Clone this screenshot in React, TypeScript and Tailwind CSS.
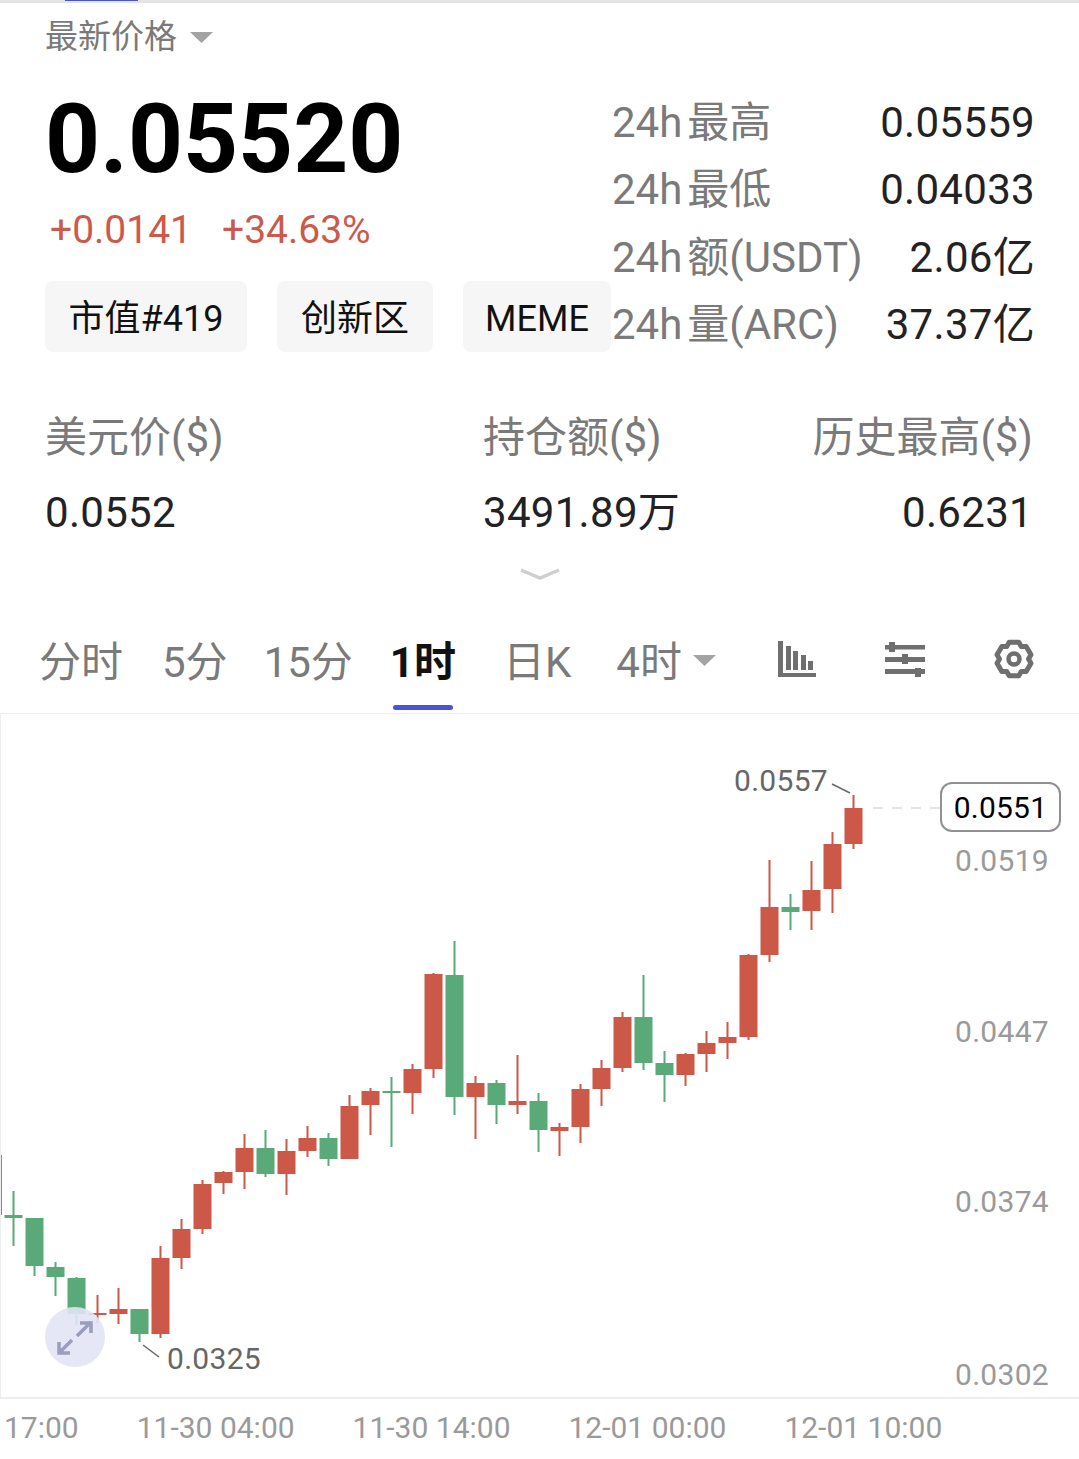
type Candle = [number, "r" | "g", number, number, number, number];

// x centre, colour, wick top, body top, body bottom, wick bottom
const candles: Candle[] = [
  [13.5, "g", 1191, 1215, 1218, 1246],
  [34.5, "g", 1218, 1218, 1266, 1276],
  [55.5, "g", 1262, 1267, 1277, 1296],
  [76.5, "g", 1277, 1278, 1314, 1325],
  [97.5, "r", 1295, 1313, 1315, 1323],
  [118.5, "r", 1288, 1309, 1314, 1324],
  [139.5, "g", 1309, 1309, 1334, 1342],
  [160.5, "r", 1246, 1258, 1334, 1338],
  [181.5, "r", 1219, 1229, 1258, 1269],
  [202.5, "r", 1180, 1184, 1229, 1234],
  [223.5, "r", 1171, 1172, 1183, 1194],
  [244.5, "r", 1134, 1148, 1172, 1189],
  [265.5, "g", 1130, 1148, 1174, 1177],
  [286.5, "r", 1139, 1151, 1174, 1195],
  [307.5, "r", 1126, 1138, 1151, 1157],
  [328.5, "g", 1133, 1138, 1159, 1166],
  [349.5, "r", 1095, 1106, 1159, 1159],
  [370.5, "r", 1088, 1091, 1105, 1135],
  [391.5, "g", 1077, 1091, 1093, 1147],
  [412.5, "r", 1064, 1069, 1093, 1114],
  [433.5, "r", 973, 974, 1069, 1078],
  [454.5, "g", 941, 975, 1097, 1115],
  [475.5, "r", 1076, 1083, 1097, 1139],
  [496.5, "g", 1080, 1083, 1105, 1124],
  [517.5, "r", 1055, 1101, 1105, 1114],
  [538.5, "g", 1093, 1101, 1130, 1152],
  [559.5, "r", 1123, 1127, 1131, 1156],
  [580.5, "r", 1084, 1089, 1127, 1143],
  [601.5, "r", 1060, 1068, 1089, 1106],
  [622.5, "r", 1012, 1017, 1068, 1072],
  [643.5, "g", 975, 1017, 1063, 1070],
  [664.5, "g", 1051, 1063, 1075, 1102],
  [685.5, "r", 1053, 1054, 1075, 1086],
  [706.5, "r", 1031, 1043, 1054, 1072],
  [727.5, "r", 1022, 1037, 1043, 1059],
  [748.5, "r", 954, 955, 1037, 1040],
  [769.5, "r", 860, 907, 955, 962],
  [790.5, "g", 894, 907, 912, 930],
  [811.5, "r", 861, 890, 911, 930],
  [832.5, "r", 832, 844, 889, 913],
  [853.5, "r", 795, 808, 844, 849],
];

const stats = [
  ["最高", "0.05559"],
  ["最低", "0.04033"],
  ["额(USDT)", "2.06亿"],
  ["量(ARC)", "37.37亿"],
];

// six flat-topped teeth, outline only
const gearPath = () => {
  const pts: string[] = [];
  for (let i = 0; i < 6; i++) {
    const a = -90 + i * 60;
    for (const [off, r] of [[-16, 17.5], [16, 17.5], [30, 14.5]]) {
      const t = ((a + off) * Math.PI) / 180;
      pts.push(`${(22 + r * Math.cos(t)).toFixed(2)} ${(22 + r * Math.sin(t)).toFixed(2)}`);
    }
  }
  return `M${pts.join("L")}Z`;
};

const Caret = ({ className }: { className: string }) => (
  <svg className={className} width="23" height="11" viewBox="0 0 23 11">
    <path d="M0 0H23L11.5 11Z" fill="#a3a3a3" />
  </svg>
);

const Chart = () => (
  <svg className="block" width="1078" height="683" viewBox="1 714 1078 683">
    <rect x="0" y="1155" width="2" height="60" fill="#57a877" />
    {candles.map(([x, c, wt, bt, bb, wb]) => {
      const fill = c === "r" ? "#cc5847" : "#59a979";
      return (
        <g key={x} fill={fill}>
          <rect x={x - 1} y={wt} width="2" height={wb - wt} />
          <rect x={x - 9} y={bt} width="18" height={bb - bt} />
        </g>
      );
    })}
    <path d="M873 808H941" stroke="#dcdcdc" strokeWidth="1.5" strokeDasharray="10 9" />
    <path d="M832 784L850 793" stroke="#666" strokeWidth="1.5" />
    <path d="M143 1345L159 1357" stroke="#666" strokeWidth="1.5" />
    <circle cx="75" cy="1337" r="30" fill="#e2e4f6" fillOpacity="0.9" />
    <path
      d="M91 1322L77 1336M80 1323H91V1333M59 1353L72 1340M59 1342V1353H70"
      fill="none"
      stroke="#9a9dbd"
      strokeWidth="3.5"
    />
  </svg>
);

export default function App() {
  return (
    <div className="w-[1079px] h-[1459px] overflow-hidden bg-white font-['Roboto','Noto_Sans_CJK_SC',sans-serif]">
      <div className="relative h-[3px] bg-[#e4e4e4]">
        <div className="absolute left-[65px] top-0 h-px w-[73px] bg-[#4a55d4]" />
      </div>

      {/* price + 24h stats */}
      <div className="flex h-[349px]">
        <div className="w-[612px] shrink-0 pl-[45px]">
          <div className="mt-[14px] flex h-[40px] items-center text-[33px] leading-[40px] text-[#7a7a7a]">
            最新价格
            <Caret className="ml-[13px] mt-[1px]" />
          </div>
          <div className="mt-[34px] text-[96px] font-bold leading-[96px] text-black">0.05520</div>
          <div className="mt-[21px] flex h-[44px] gap-[30px] pl-[5px] text-[39px] leading-[44px] text-[#cb5a4c]">
            <span>+0.0141</span>
            <span>+34.63%</span>
          </div>
          <div className="mt-[29px] flex gap-[30px] text-[36px] text-[#111]">
            <div className="flex h-[71px] w-[202px] items-center justify-center rounded-lg bg-[#f6f6f6] pt-[5px]">市值#419</div>
            <div className="flex h-[71px] w-[156px] items-center justify-center rounded-lg bg-[#f6f6f6] pt-[5px]">创新区</div>
            <div className="flex h-[71px] w-[148px] items-center justify-center rounded-lg bg-[#f6f6f6] pt-[5px]">MEME</div>
          </div>
        </div>
        <div className="flex-1 pr-[44px] pt-[85.5px] text-[42px] leading-[67.5px]">
          {stats.map(([label, value]) => (
            <div key={label} className="flex justify-between whitespace-nowrap">
              <span className="text-[#7a7a7a]">
                <span className="mr-[5px]">24h</span>
                {label}
              </span>
              <span className="tracking-[0.3px] text-[#222]">{value}</span>
            </div>
          ))}
        </div>
      </div>

      {/* usd / open interest / ath */}
      <div className="mt-[61px] flex pl-[45px] pr-[46px] text-[42px] leading-[50px]">
        <div className="w-[438px]">
          <div className="text-[#7a7a7a]">美元价($)</div>
          <div className="mt-[25px] tracking-[0.3px] text-[#222]">0.0552</div>
        </div>
        <div className="flex-1">
          <div className="text-[#7a7a7a]">持仓额($)</div>
          <div className="mt-[25px] tracking-[0.3px] text-[#222]">3491.89万</div>
        </div>
        <div className="text-right">
          <div className="text-[#7a7a7a]">历史最高($)</div>
          <div className="mt-[25px] tracking-[0.3px] text-[#222]">0.6231</div>
        </div>
      </div>

      <div className="mt-[30px] flex justify-center">
        <svg width="40" height="12" viewBox="0 0 40 12">
          <path d="M1 2L20 10L39 2" fill="none" stroke="#cfcfcf" strokeWidth="3.5" />
        </svg>
      </div>

      {/* period tabs */}
      <div className="mt-[34px] flex h-[99px] items-center pb-[1px] pl-[39px] text-[42px] leading-[50px] text-[#7a7a7a]">
        <span>分时</span>
        <span className="ml-[39px]">5分</span>
        <span className="ml-[36px]">15分</span>
        <span className="relative ml-[37px] font-bold text-[#111]">
          1时
          <span className="absolute left-[3px] top-[67px] h-[5px] w-[60px] rounded-full bg-[#4a55d4]" />
        </span>
        <span className="ml-[47px]">日K</span>
        <span className="ml-[45px]">4时</span>
        <Caret className="mb-[5px] ml-[11px]" />
        <svg className="mb-[8px] ml-[62px]" width="38" height="36" viewBox="0 0 38 36" fill="#6f6f6f">
          <path d="M0 0H5V32H38V36H0Z" />
          <rect x="8" y="5" width="5" height="24" />
          <rect x="15" y="10" width="5" height="19" />
          <rect x="23" y="14" width="5" height="15" />
          <rect x="30" y="20" width="5" height="9" />
        </svg>
        <svg className="mb-[8px] ml-[69px]" width="40" height="35" viewBox="0 0 40 35" fill="#6f6f6f">
          <rect x="0" y="3" width="40" height="4.5" />
          <rect x="4" y="0" width="6" height="10" />
          <rect x="0" y="15" width="40" height="5" />
          <rect x="17" y="12" width="6" height="10" />
          <rect x="0" y="27" width="40" height="5" />
          <rect x="30" y="26" width="6" height="9" />
        </svg>
        <svg className="mb-[8px] ml-[67px]" width="44" height="44" viewBox="0 0 44 44" fill="none" stroke="#6f6f6f">
          <path d={gearPath()} strokeWidth="5" strokeLinejoin="round" />
          <circle cx="22" cy="22" r="5.5" strokeWidth="4.5" />
        </svg>
      </div>

      {/* chart */}
      <div className="relative border-b-2 border-l border-t border-[#eeeeee]">
        <Chart />
        <span className="absolute left-[733px] top-[47px] text-[30px] leading-[40px] tracking-[0.3px] text-[#666]">0.0557</span>
        <span className="absolute left-[166px] top-[625px] text-[30px] leading-[40px] tracking-[0.3px] text-[#666]">0.0325</span>
        <div className="absolute left-[939px] top-[68px] flex h-[50px] w-[121px] items-center justify-center rounded-xl border-2 border-[#909090] bg-white text-[30px] tracking-[0.2px] text-black">
          0.0551
        </div>
        <span className="absolute left-[954px] top-[127px] text-[30px] leading-[40px] tracking-[0.3px] text-[#9a9a9a]">0.0519</span>
        <span className="absolute left-[954px] top-[298px] text-[30px] leading-[40px] tracking-[0.3px] text-[#9a9a9a]">0.0447</span>
        <span className="absolute left-[954px] top-[468px] text-[30px] leading-[40px] tracking-[0.3px] text-[#9a9a9a]">0.0374</span>
        <span className="absolute left-[954px] top-[641px] text-[30px] leading-[40px] tracking-[0.3px] text-[#9a9a9a]">0.0302</span>
      </div>

      {/* time axis */}
      <div className="flex h-[56px] items-center gap-[58px] whitespace-nowrap pl-[4px] text-[30px] text-[#9a9a9a]">
        <span>17:00</span>
        <span>11-30 04:00</span>
        <span>11-30 14:00</span>
        <span>12-01 00:00</span>
        <span>12-01 10:00</span>
      </div>
    </div>
  );
}
